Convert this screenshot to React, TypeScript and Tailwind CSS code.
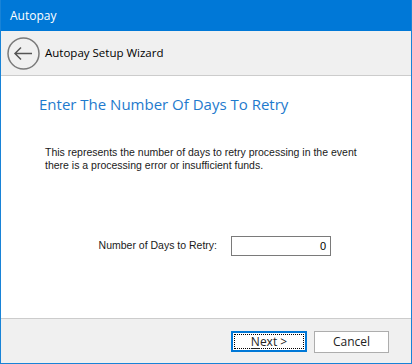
export default function App() {
  return (
    <div className="w-[412px] h-[364px] flex flex-col border border-t-0 border-[#1883d7] bg-white font-['Open_Sans',sans-serif] overflow-hidden">
      {/* title bar */}
      <div className="h-[31px] shrink-0 bg-[#0078d7] -mx-px flex items-center pl-[10px] text-white text-[12px]">
        Autopay
      </div>

      {/* wizard header */}
      <div className="h-[45px] shrink-0 bg-[#f0f0f0] border-b border-[#cccccc] flex items-center pl-[6px] gap-[5px]">
        <svg width="33" height="33" viewBox="0 0 33 33" className="shrink-0">
          <circle cx="16.5" cy="16.5" r="15.5" fill="none" stroke="#7a7a7a" strokeWidth="1.5" />
          <path d="M8 16.5h17M14 10.5l-6 6 6 6" fill="none" stroke="#555" strokeWidth="1.5" />
        </svg>
        <span className="text-[11.5px] text-black">Autopay Setup Wizard</span>
      </div>

      {/* content */}
      <div className="flex-1 flex flex-col">
        <h1 className="mt-[17px] ml-[38px] text-[15px] text-[#1e7acd] leading-[22px]">
          Enter The Number Of Days To Retry
        </h1>
        <p className="mt-[31px] ml-[44px] w-[330px] font-['Liberation_Sans',Arial,sans-serif] text-[10.5px] leading-[13px] text-[#1a1a1a]">
          This represents the number of days to retry processing in the event there is a processing error or insufficient funds.
        </p>
        <div className="mt-[64px] flex items-center">
          <span className="w-[216px] text-right whitespace-nowrap font-['Liberation_Sans',Arial,sans-serif] text-[10.5px] text-[#1a1a1a]">
            Number of Days to Retry:
          </span>
          <div className="ml-[14px] w-[100px] h-[20px] border border-[#7a7a7a] flex items-center justify-end pr-[4px] font-['Liberation_Sans',Arial,sans-serif] text-[11px] text-black">
            0
          </div>
        </div>
      </div>

      {/* footer */}
      <div className="h-[45px] shrink-0 bg-[#f0f0f0] border-t border-[#cccccc] flex items-start justify-end pt-[12px] pr-[22px] gap-[7px]">
        <button className="w-[76px] h-[21px] border-2 border-[#0078d7] bg-white p-px">
          <div className="h-full border border-dotted border-black flex items-center justify-center text-[12px] text-[#222]">
            <span><span className="underline underline-offset-2">N</span>ext &gt;</span>
          </div>
        </button>
        <button className="w-[75px] h-[22px] border border-[#adadad] bg-white flex items-center justify-center text-[12px] text-[#222]">
          Cancel
        </button>
      </div>
    </div>
  );
}
